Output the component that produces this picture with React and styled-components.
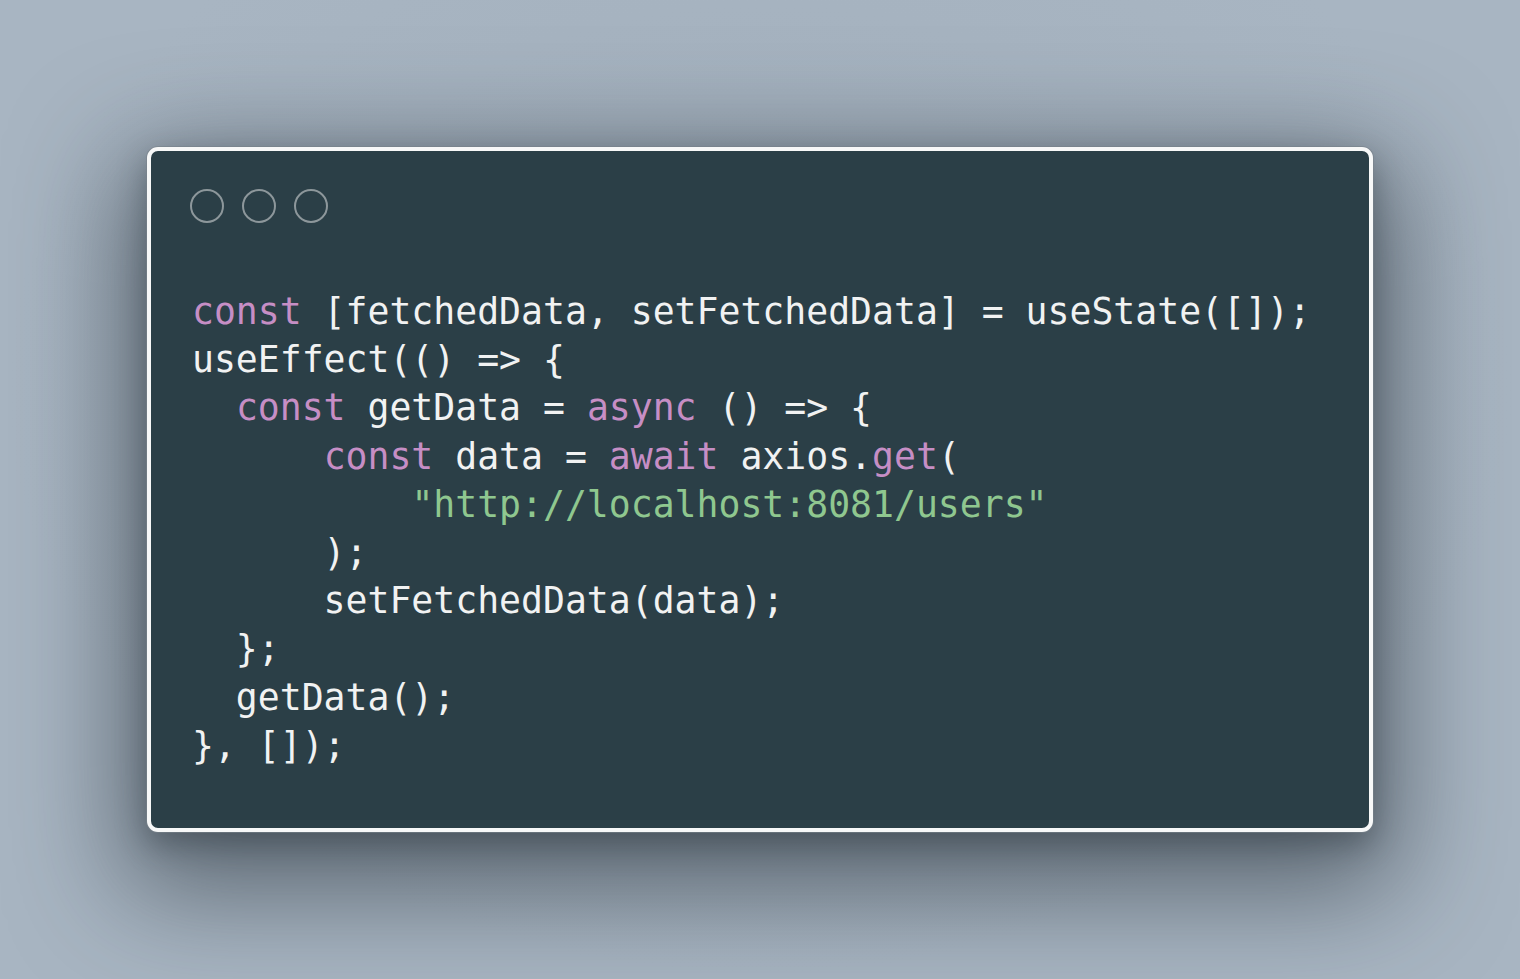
import React from 'react';
import styled, { createGlobalStyle } from 'styled-components';

const GlobalStyle = createGlobalStyle`
  html, body {
    margin: 0;
    padding: 0;
    height: 100%;
  }
  body {
    background: #a8b5c2;
    font-family: 'DejaVu Sans Mono', monospace;
  }
  #root {
    height: 100%;
  }
`;

const Stage = styled.div`
  width: 1520px;
  height: 979px;
  display: flex;
  align-items: center;
  justify-content: center;
  background: radial-gradient(ellipse at 50% 40%, #a2afbc 0%, #a8b5c2 70%);
  overflow: hidden;
`;

const Window = styled.div`
  width: 1226px;
  height: 685px;
  box-sizing: border-box;
  background: #2b3f47;
  border: 4px solid #f7f8f8;
  border-radius: 11px;
  padding: 38px 39px 0 39px;
  box-shadow:
    0 0 0 1px rgba(120, 130, 138, 0.6),
    0 35px 110px 25px rgba(40, 50, 58, 0.6),
    0 12px 30px rgba(40, 50, 58, 0.4);
`;

const Controls = styled.div`
  display: flex;
  gap: 18px;
  height: 34px;
`;

const Dot = styled.span`
  width: 34px;
  height: 34px;
  box-sizing: border-box;
  border-radius: 50%;
  border: 2px solid #8d979b;
`;

const Code = styled.pre`
  margin: 65px 0 0 2px;
  font-family: 'DejaVu Sans Mono', monospace;
  font-size: 36.45px;
  line-height: 48.2px;
  color: #f1f2f2;
  white-space: pre;
`;

const Tok = styled.span`
  color: ${({ kind }) =>
    kind === 'kw' ? '#c68ec5' : kind === 'str' ? '#8fc78f' : 'inherit'};
`;

const K = ({ children }) => <Tok kind='kw'>{children}</Tok>;
const S = ({ children }) => <Tok kind='str'>{children}</Tok>;

export default function App() {
  return (
    <>
      <GlobalStyle />
      <Stage>
        <Window>
          <Controls>
            <Dot />
            <Dot />
            <Dot />
          </Controls>
          <Code>
            <K>const</K>{' [fetchedData, setFetchedData] = useState([]);\n'}
            {'useEffect(() => {\n'}
            {'  '}<K>const</K>{' getData = '}<K>async</K>{' () => {\n'}
            {'      '}<K>const</K>{' data = '}<K>await</K>{' axios.'}<K>get</K>{'(\n'}
            {'          '}<S>"http://localhost:8081/users"</S>{'\n'}
            {'      );\n'}
            {'      setFetchedData(data);\n'}
            {'  };\n'}
            {'  getData();\n'}
            {'}, []);'}
          </Code>
        </Window>
      </Stage>
    </>
  );
}
